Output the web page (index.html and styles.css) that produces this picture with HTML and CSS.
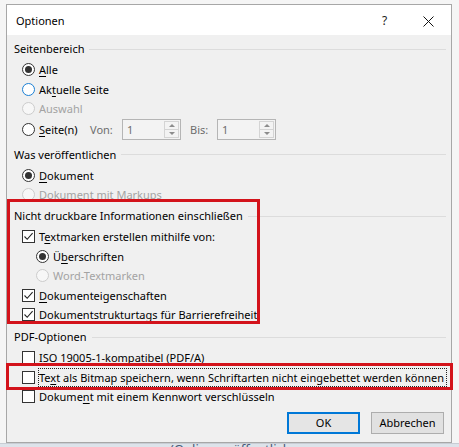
FILE: index.html
```html
<!DOCTYPE html>
<html lang="de">
<head>
<meta charset="utf-8">
<title>Optionen</title>
<link rel="stylesheet" href="styles.css">
</head>
<body>
<div class="screen">
  <div class="dialog">
    <div class="titlebar">
      <span class="title">Optionen</span>
      <span class="help">?</span>
      <span class="close"><svg width="11" height="11" viewBox="0 0 11 11"><path d="M0.5 0.5L10.5 10.5M10.5 0.5L0.5 10.5" stroke="#111" stroke-width="1" fill="none"/></svg></span>
    </div>
    <div class="content">
      <section class="group g1">
        <div class="ghead"><span>Seitenbereich</span></div>
        <div class="rows">
          <div class="row"><span class="radio checked"></span><span class="lbl"><u>A</u>lle</span></div>
          <div class="row"><span class="radio focus"></span><span class="lbl">Ak<u>t</u>uelle Seite</span></div>
          <div class="row"><span class="radio disabled"></span><span class="lbl dis">Auswahl</span></div>
          <div class="row tall">
            <span class="radio"></span><span class="lbl wseite"><u>S</u>eite(n)</span>
            <span class="plbl wvon">Von:</span>
            <span class="spin"><span class="val">1</span><span class="arrows"><span class="up"></span><span class="down"></span></span></span>
            <span class="plbl wbis">Bis:</span>
            <span class="spin"><span class="val">1</span><span class="arrows"><span class="up"></span><span class="down"></span></span></span>
          </div>
        </div>
      </section>
      <section class="group g2">
        <div class="ghead"><span>Was veröffentlichen</span></div>
        <div class="rows">
          <div class="row"><span class="radio checked"></span><span class="lbl"><u>D</u>okument</span></div>
          <div class="row"><span class="radio disabled"></span><span class="lbl dis">Dokument mit Markups</span></div>
        </div>
      </section>
      <section class="group g3">
        <div class="ghead"><span>Nicht druckbare Informationen einschließen</span></div>
        <div class="rows">
          <div class="row"><span class="check on"><svg width="11" height="11" viewBox="0 0 11 11"><path d="M1.5 5.5L4.2 8.3L9.6 2.2" stroke="#222" stroke-width="1.1" fill="none"/></svg></span><span class="lbl">T<u>e</u>xtmarken erstellen mithilfe von:</span></div>
          <div class="row sub"><span class="radio checked"></span><span class="lbl">Ü<u>b</u>erschriften</span></div>
          <div class="row sub"><span class="radio disabled"></span><span class="lbl dis">Word-Textmarken</span></div>
          <div class="row"><span class="check on"><svg width="11" height="11" viewBox="0 0 11 11"><path d="M1.5 5.5L4.2 8.3L9.6 2.2" stroke="#222" stroke-width="1.1" fill="none"/></svg></span><span class="lbl"><u>D</u>okumenteigenschaften</span></div>
          <div class="row"><span class="check on"><svg width="11" height="11" viewBox="0 0 11 11"><path d="M1.5 5.5L4.2 8.3L9.6 2.2" stroke="#222" stroke-width="1.1" fill="none"/></svg></span><span class="lbl">Dok<u>u</u>mentstrukturtags für Barrierefreiheit</span></div>
        </div>
      </section>
      <section class="group g4">
        <div class="ghead"><span>PDF-Optionen</span></div>
        <div class="rows">
          <div class="row"><span class="check"></span><span class="lbl"><u>I</u>SO 19005-1-kompatibel (PDF/A)</span></div>
          <div class="row"><span class="check"></span><span class="lbl focusrect">Te<u>x</u>t als Bitmap speichern, wenn Schriftarten nicht eingebettet werden können</span></div>
          <div class="row"><span class="check"></span><span class="lbl">Dokume<u>n</u>t mit einem Kennwort verschlüsseln</span></div>
        </div>
      </section>
      <div class="buttons">
        <button class="btn default">OK</button>
        <button class="btn">Abbrechen</button>
      </div>
    </div>
  </div>
  <div class="under"><span>(Onlineveröffentlichung</span></div>
  <div class="mark m1"></div>
  <div class="mark m2"></div>
</div>
</body>
</html>
```

FILE: styles.css
```css
* { box-sizing: border-box; }
html, body { margin: 0; padding: 0; }
body {
  font-family: "Noto Sans", "Open Sans", sans-serif;
  font-size: 11px;
  color: #000;
  background: #f4f4f4;
}
.screen {
  position: relative;
  width: 459px;
  height: 447px;
  overflow: hidden;
  background: #f5f5f5;
}
.dialog {
  margin: 4px 0 0 6px;
  width: 446px;
  height: 439px;
  border: 1px solid #a7a7a7;
  background: #f0f0f0;
  display: flex;
  flex-direction: column;
}
.titlebar {
  height: 30px;
  background: #fff;
  display: flex;
  align-items: center;
  padding-left: 9px;
  padding-top: 1px;
}
.title { flex: 1; font-size: 11px; }
.help {
  width: 41px;
  font-size: 12px;
  color: #222;
}
.close {
  width: 11px;
  margin-right: 17px;
  display: flex;
  align-items: center;
  padding-top: 2px;
}
.content {
  flex: 1;
  padding: 4px 5px 0 7px;
  display: flex;
  flex-direction: column;
}
.ghead {
  height: 20px;
  display: flex;
  align-items: center;
  gap: 5px;
  line-height: 20px;
}
.ghead::after {
  content: "";
  flex: 1;
  height: 1px;
  background: #dcdcdc;
}
.g2 { margin-top: 5px; }
.g3 { margin-top: 1.5px; }
.g4 { margin-top: 2.5px; }
.rows { padding-top: 1px; }
.row {
  height: 19.5px;
  display: flex;
  align-items: center;
  padding-left: 8px;
}
.row.tall { height: 21px; }
.row.sub { padding-left: 22px; }
.radio {
  width: 13px;
  height: 13px;
  border: 1px solid #333;
  border-radius: 50%;
  background: #fff;
  display: flex;
  align-items: center;
  justify-content: center;
  flex: none;
}
.radio.checked::after {
  content: "";
  width: 7px;
  height: 7px;
  border-radius: 50%;
  background: #333;
}
.radio.focus { border-color: #1a7fd4; }
.radio.disabled { border-color: #cccccc; background: #f7f7f7; }
.check {
  width: 13px;
  height: 13px;
  border: 1px solid #333;
  background: #fff;
  flex: none;
  display: flex;
  align-items: center;
  justify-content: center;
}
.check svg { display: block; }
.lbl { margin-left: 4px; white-space: nowrap; }
.lbl.dis { color: #a3a3a3; }
.lbl u { text-decoration-thickness: 1px; text-underline-offset: 2px; }
.wseite { width: 51px; }
.plbl { color: #6d6d6d; }
.wvon { width: 32px; }
.wbis { width: 27px; margin-left: 9px; }
.spin {
  width: 59px;
  height: 21px;
  border: 1px solid #b5b5b5;
  background: #f3f3f3;
  display: flex;
  align-items: stretch;
  padding: 1px;
}
.val {
  flex: 1;
  color: #6d6d6d;
  padding-left: 3px;
  line-height: 18px;
}
.arrows {
  width: 15px;
  display: flex;
  flex-direction: column;
  border: 1px solid #d4d4d4;
}
.up, .down {
  flex: 1;
  display: flex;
  align-items: center;
  justify-content: center;
}
.up { border-bottom: 1px solid #d4d4d4; }
.up::after {
  content: "";
  border-left: 3px solid transparent;
  border-right: 3px solid transparent;
  border-bottom: 3px solid #8c8c8c;
}
.down::after {
  content: "";
  border-left: 3px solid transparent;
  border-right: 3px solid transparent;
  border-top: 3px solid #8c8c8c;
}
.focusrect {
  border: 1px dotted #222;
  margin-left: 3px;
  padding: 0 2px 0 0;
  line-height: 17px;
}
.buttons {
  margin-top: 5px;
  display: flex;
  justify-content: flex-end;
  gap: 11px;
  padding-right: 2px;
}
.btn {
  font-family: "Noto Sans", "Open Sans", sans-serif;
  font-size: 11px;
  color: #000;
  width: 73px;
  height: 22px;
  background: #e1e1e1;
  border: 1px solid #adadad;
  padding: 0;
  margin: 0;
}
.btn.default {
  border: 2px solid #0078d7;
  background: #e5e5e5;
}
.under {
  height: 4px;
  overflow: hidden;
  padding-left: 170px;
  background: #dde3ea;
  border-top: 1px solid #c8cdd4;
}
.under span {
  display: block;
  font-size: 13px;
  line-height: 13px;
  margin-top: -1px;
  color: #4a5a78;
}
.mark {
  position: absolute;
  border: 3px solid #d3131b;
}
.m1 { left: 7px; top: 199px; width: 253px; height: 125px; }
.m2 { left: 6px; top: 363px; width: 447px; height: 27px; }
```
